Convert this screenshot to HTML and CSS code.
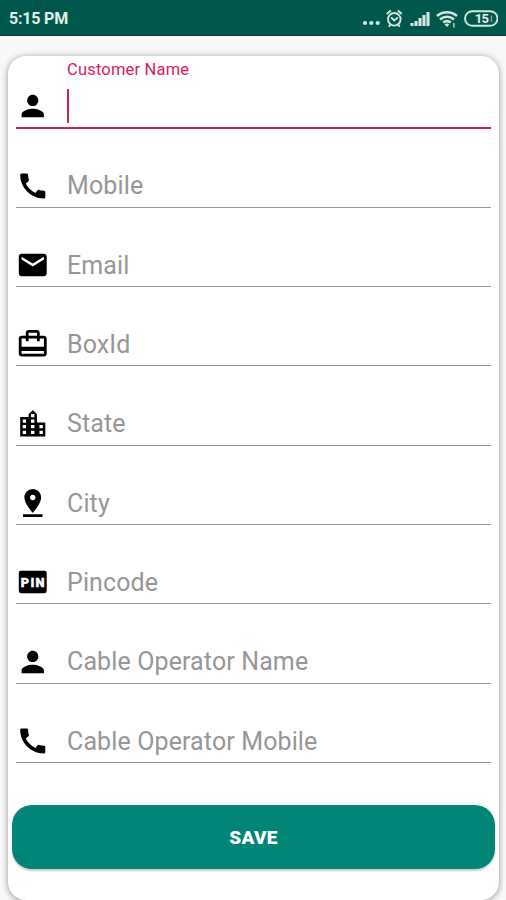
FILE: index.html
```html
<!DOCTYPE html>
<html lang="en">
<head>
<meta charset="utf-8">
<title>Customer</title>
<link rel="stylesheet" href="styles.css">
</head>
<body>
<svg class="defs" aria-hidden="true">
  <symbol id="person" viewBox="0 0 24 24"><path d="M12 12c2.210 0 4-1.790 4-4s-1.790-4-4-4-4 1.790-4 4 1.790 4 4 4zm0 2c-2.670 0-8 1.340-8 4v2h16v-2c0-2.660-5.330-4-8-4z"/></symbol>
  <symbol id="phone" viewBox="0 0 24 24"><path d="M20.010 15.380c-1.230 0-2.420-.2-3.530-.56-.35-.12-.74-.03-1.010.24l-1.570 1.970c-2.830-1.350-5.480-3.900-6.890-6.830l1.950-1.660c.27-.28.35-.67.24-1.020-.37-1.110-.56-2.300-.56-3.530 0-.54-.45-.99-.99-.99H4.190C3.650 3 3 3.240 3 3.990 3 13.280 10.730 21 20.010 21c.71 0 .99-.63.99-1.180v-3.450c0-.54-.45-.99-.99-.99z"/></symbol>
</svg>
<header class="status">
  <span class="time">5:15 PM</span>
  <svg class="indicators" viewBox="0 0 138 24" fill="none" stroke="#d5e5e0">
    <g fill="#d5e5e0" stroke="none"><circle cx="5" cy="16" r="2.100"/><circle cx="11.300" cy="16" r="2.100"/><circle cx="17.700" cy="16" r="2.100"/></g>
    <g stroke-width="1.900"><circle cx="34.300" cy="12.300" r="6.300"/><path d="M26.800 7l4-3.500M41.800 7l-4-3.500M30.300 17.800l-1.500 2M38.300 17.800l1.500 2M31.100 10.500l3.200 3 3.500-3"/></g>
    <g stroke-width="3.100"><path d="M52 19v-3M56 19v-5M60 19v-8M64 19v-11M68 19v-14"/></g>
    <g stroke-width="2.600"><path d="M77 9c6-5 14-5 20 0M80 12.400c4.500-3.400 9.500-3.400 14 0M83.200 15.500c2.500-1.800 5.100-1.800 7.600 0"/><path d="M84.500 17.300q2.500-1.500 5 0L87 20z" fill="#d5e5e0" stroke="none"/><path d="M93.900 16v4.500" stroke-width="1.300"/></g>
    <rect x="105" y="4.200" width="32.500" height="14.600" rx="7.300" stroke-width="1.900"/>
    <path d="M131.500 8.500v6.500" stroke-width="1.300" opacity=".6"/>
    <text x="121.500" y="16.200" class="battery">15</text>
  </svg>
</header>
<main class="card">
  <form>
    <div class="field active"><svg class="icon"><use href="#person"/></svg><div class="entry"><span class="float">Customer Name</span><i class="caret"></i></div></div>
    <div class="field"><svg class="icon"><use href="#phone"/></svg><span class="hint">Mobile</span></div>
    <div class="field"><svg class="icon" viewBox="0 0 24 24"><path d="M20 4H4c-1.100 0-2 .9-2 2v12c0 1.100.9 2 2 2h16c1.100 0 2-.9 2-2V6c0-1.100-.9-2-2-2zm0 4l-8 5-8-5V6l8 5 8-5v2z"/></svg><span class="hint">Email</span></div>
    <div class="field"><svg class="icon" viewBox="0 0 24 24"><path d="M20 6h-3V4c0-1.110-.89-2-2-2H9c-1.110 0-2 .89-2 2v2H4c-1.110 0-2 .89-2 2v11c0 1.110.89 2 2 2h16c1.110 0 2-.89 2-2V8c0-1.110-.89-2-2-2zM9 4h6v2H9V4zm11 15H4v-2h16v2zm0-5H4V8h3v2h2V8h6v2h2V8h3v6z"/></svg><span class="hint">BoxId</span></div>
    <div class="field"><svg class="icon" viewBox="0 0 24 24"><path d="M15 11V5l-3-3-3 3v2H3v14h18V11h-6z"/><path fill="#fff" d="M4.800 8.800h2.400v2.300H4.800zM4.800 12.800h2.400v2.300H4.800zM4.800 16.800h2.400v2.300H4.800zM10.800 4.800h2.400v2.300h-2.400zM10.800 8.800h2.400v2.300h-2.400zM10.800 12.800h2.400v2.300h-2.400zM10.800 16.800h2.400v2.300h-2.400zM16.800 12.800h2.400v2.300h-2.400zM16.800 16.800h2.400v2.300h-2.400z"/></svg><span class="hint">State</span></div>
    <div class="field"><svg class="icon" viewBox="0 0 24 24"><path d="M18 8c0-3.310-2.690-6-6-6S6 4.690 6 8c0 4.500 6 11 6 11s6-6.500 6-11zm-8 0c0-1.100.9-2 2-2s2 .9 2 2-.89 2-2 2c-1.100 0-2-.9-2-2zM5 20v2h14v-2H5z"/></svg><span class="hint">City</span></div>
    <div class="field"><svg class="icon" viewBox="0 0 24 24"><rect x="2" y="4" width="20" height="16" rx="1.500"/><text x="12.400" y="15.400" class="pin">PIN</text></svg><span class="hint">Pincode</span></div>
    <div class="field"><svg class="icon"><use href="#person"/></svg><span class="hint">Cable Operator Name</span></div>
    <div class="field"><svg class="icon"><use href="#phone"/></svg><span class="hint">Cable Operator Mobile</span></div>
    <button type="button" class="save">SAVE</button>
  </form>
</main>
</body>
</html>
```
FILE: styles.css
```css
* { box-sizing: border-box; }
body {
  margin: 0;
  height: 900px;
  overflow: hidden;
  background: #f8f8f8;
  font-family: Roboto, "Liberation Sans", sans-serif;
}
.defs { display: none; }
.status {
  height: 36px;
  padding: 2px 8px 0 9px;
  display: flex;
  align-items: center;
  justify-content: space-between;
  background: #00574b;
  border-bottom: 1px solid #003d2e;
}
.time { color: #e3efeb; font-size: 16px; font-weight: 700; letter-spacing: -.2px; }
.indicators { width: 138px; height: 24px; }
.battery {
  fill: #e3efeb;
  stroke: none;
  font-size: 13px;
  font-weight: 700;
  letter-spacing: -.8px;
  text-anchor: middle;
}
.card {
  margin: 20px 7px 0 8px;
  height: 844px;
  padding: 0 8px;
  background: #fff;
  border-radius: 18px;
  box-shadow: 0 1px 6px rgba(0, 0, 0, .42);
}
.field {
  height: 79.350px;
  padding-bottom: 4px;
  display: flex;
  align-items: flex-end;
  gap: 17.500px;
  border-bottom: 1.500px solid #969696;
}
.icon { width: 33.500px; height: 34px; flex: none; }
.hint {
  height: 33.400px;
  line-height: 34px;
  font-size: 25px;
  letter-spacing: .12px;
  color: #969696;
  white-space: nowrap;
}
.pin {
  fill: #fff;
  stroke: #fff;
  stroke-width: .3px;
  font-size: 9.200px;
  font-weight: 900;
  letter-spacing: .9px;
  text-anchor: middle;
}
.field.active {
  height: 73px;
  margin-bottom: -.7px;
  border-bottom: 2px solid #cf2347;
}
.entry {
  height: 100%;
  display: flex;
  flex-direction: column;
  justify-content: space-between;
}
.float {
  padding-top: 4px;
  font-size: 16.500px;
  line-height: 20px;
  letter-spacing: .18px;
  color: #d81b60;
}
.caret { width: 2px; height: 34px; background: #c2284b; }
.save {
  display: block;
  width: 483px;
  height: 64px;
  margin: 41.500px 0 0 -4px;
  padding: 1px 0 0;
  border: 0;
  border-radius: 20px;
  background: #008577;
  box-shadow: 0 2px 2px rgba(0, 0, 0, .2);
  color: #fff;
  font: 900 19px Roboto, "Liberation Sans", sans-serif;
  letter-spacing: .3px;
}
```
